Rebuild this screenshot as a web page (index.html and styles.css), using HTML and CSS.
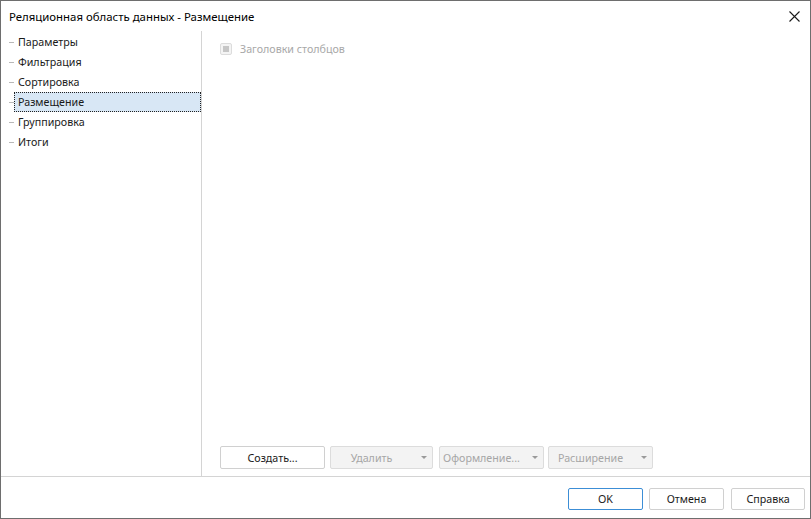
FILE: index.html
```html
<!DOCTYPE html>
<html>
<head>
	<title>Реляционная область данных - Размещение</title>
	<link rel="stylesheet" href="styles.css">
</head>
<body>
	<div class="window">
		<div class="titlebar">
			<span class="title">Реляционная область данных - Размещение</span>
			<span class="close">
				<svg width="11" height="11" viewBox="0 0 11 11"><path d="M0.5 0.5L10.5 10.5M10.5 0.5L0.5 10.5" stroke="#1a1a1a" stroke-width="1.1" fill="none"/></svg>
			</span>
		</div>
		<div class="main">
			<div class="tree">
				<div class="item"><span class="dash"></span><span class="label">Параметры</span></div>
				<div class="item"><span class="dash"></span><span class="label">Фильтрация</span></div>
				<div class="item"><span class="dash"></span><span class="label">Сортировка</span></div>
				<div class="item selected"><span class="dash"></span><span class="label">Размещение</span></div>
				<div class="item"><span class="dash"></span><span class="label">Группировка</span></div>
				<div class="item"><span class="dash"></span><span class="label">Итоги</span></div>
			</div>
			<div class="content">
				<div class="check">
					<span class="box"><span class="mark"></span></span>
					<span class="check-label">Заголовки столбцов</span>
				</div>
				<div class="toolbar">
					<div class="btn create">Создать...</div>
					<div class="btn disabled drop del">Удалить<span class="arrow"></span></div>
					<div class="btn disabled drop style">Оформление...<span class="arrow"></span></div>
					<div class="btn disabled drop ext">Расширение<span class="arrow"></span></div>
				</div>
			</div>
		</div>
		<div class="footer">
			<div class="btn foot default">OK</div>
			<div class="btn foot">Отмена</div>
			<div class="btn foot help">Справка</div>
		</div>
	</div>
</body>
</html>
```

FILE: styles.css
```css
html, body{
	margin: 0;
	padding: 0;
}
body{
	font-family: "Noto Sans", "Open Sans", sans-serif;
	font-size: 10.7px;
	color: #1a1a1a;
	background: #fff;
}
.window{
	width: 811px;
	height: 519px;
	box-sizing: border-box;
	border: 1px solid #6e6e6e;
	display: flex;
	flex-direction: column;
	background: #fff;
}
.titlebar{
	height: 30px;
	display: flex;
	align-items: center;
	justify-content: space-between;
	padding-left: 8px;
	padding-right: 10px;
	flex-shrink: 0;
}
.title{
	font-size: 11.4px;
	color: #000;
	margin-top: 1px;
}
.close{
	display: flex;
	width: 11px;
	height: 11px;
	margin-top: 1px;
}
.main{
	flex: 1;
	display: flex;
	border-bottom: 1px solid #d4d4d4;
}
.tree{
	width: 200px;
	border-right: 1px solid #d4d4d4;
	padding-top: 1px;
}
.item{
	height: 20px;
	display: flex;
	align-items: center;
}
.dash{
	width: 5px;
	height: 1px;
	background: #b8b8b8;
	margin-left: 8px;
}
.label{
	height: 20px;
	line-height: 18px;
	padding-left: 3px;
	flex: 1;
	box-sizing: border-box;
	border: 1px dotted transparent;
}
.item.selected .label{
	background: #d8e7f5;
	border: 1px dotted #222;
}
.content{
	flex: 1;
	display: flex;
	flex-direction: column;
	padding: 12px 0 7px 18px;
}
.check{
	display: flex;
	align-items: center;
	height: 12px;
}
.box{
	width: 12px;
	height: 12px;
	box-sizing: border-box;
	border: 1px solid #dcdcdc;
	border-radius: 2px;
	background: #f4f4f4;
	display: flex;
	align-items: center;
	justify-content: center;
}
.mark{
	width: 6px;
	height: 6px;
	background: #c6c6c6;
}
.check-label{
	color: #a8a8a8;
	margin-left: 8px;
}
.toolbar{
	margin-top: auto;
	display: flex;
}
.btn{
	height: 23px;
	box-sizing: border-box;
	border: 1px solid #d0d0d0;
	border-radius: 2px;
	background: #fff;
	display: flex;
	align-items: center;
	justify-content: center;
	color: #1a1a1a;
}
.create{
	width: 105px;
}
.del{
	width: 103px;
	margin-left: 5px;
}
.style{
	width: 105px;
	margin-left: 6px;
}
.ext{
	width: 105px;
	margin-left: 4px;
}
.btn.disabled{
	background: #f3f3f3;
	color: #a6a6a6;
	border-color: #dcdcdc;
}
.btn.drop{
	padding-right: 20px;
	position: relative;
}
.arrow{
	position: absolute;
	right: 5px;
	top: 9px;
	width: 0;
	height: 0;
	border-left: 3px solid transparent;
	border-right: 3px solid transparent;
	border-top: 3px solid #9a9a9a;
}
.footer{
	height: 41px;
	display: flex;
	justify-content: flex-end;
	align-items: center;
	padding-right: 5px;
	flex-shrink: 0;
}
.btn.foot{
	width: 75px;
	height: 22px;
	margin-top: 2px;
	margin-left: 6px;
}
.btn.foot.help{
	width: 74px;
	margin-left: 7px;
}
.btn.foot.default{
	border-color: #3c8ed6;
}
```
